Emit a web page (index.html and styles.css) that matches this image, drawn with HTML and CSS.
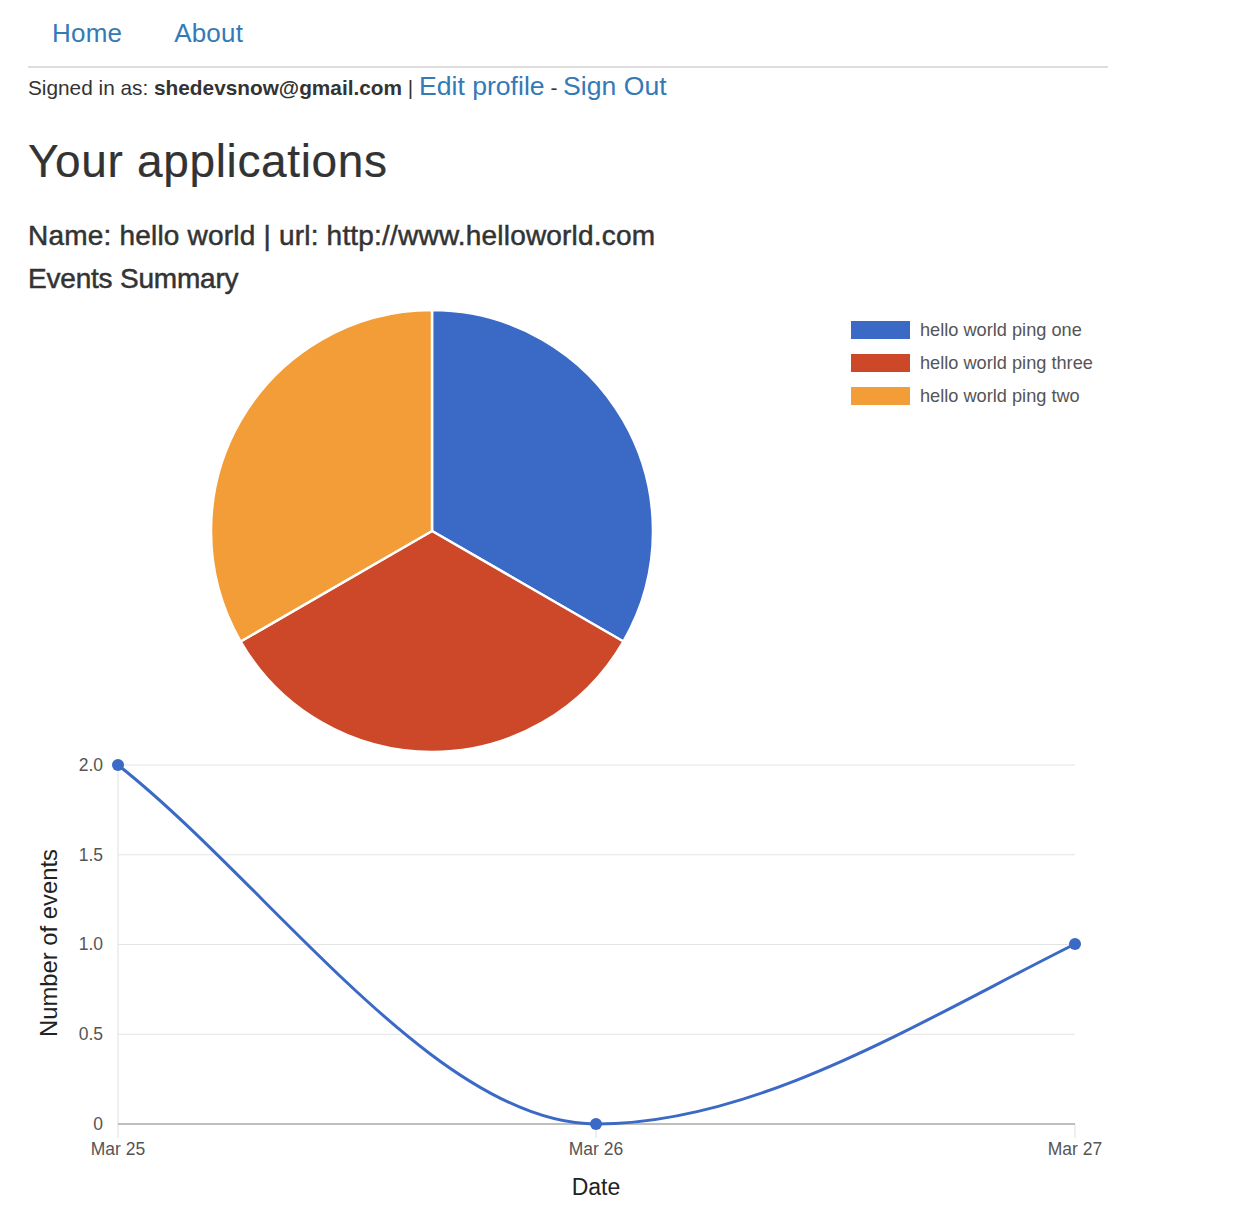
FILE: index.html
```html
<!DOCTYPE html>
<html lang="en">
<head>
<meta charset="utf-8">
<title>Your applications</title>
<link rel="stylesheet" href="styles.css">
</head>
<body>
<div class="page">
  <nav class="nav">
    <a href="#">Home</a>
    <a href="#">About</a>
  </nav>
  <p class="signed">Signed in as: <strong>shedevsnow@gmail.com</strong> | <a href="#">Edit profile</a> - <a href="#">Sign Out</a></p>
  <h1 class="title">Your applications</h1>
  <h3 class="app-name">Name: hello world | url: http://www.helloworld.com</h3>
  <h4 class="summary">Events Summary</h4>
  <svg class="pie" width="1080" height="461" viewBox="28 294 1080 461">
    <g stroke="#fff" stroke-width="2.5" stroke-linejoin="round">
      <path d="M432,531 L432,310 A221,221 0 0 1 623.4,641.5 Z" fill="#3a69c6"/>
      <path d="M432,531 L623.4,641.5 A221,221 0 0 1 240.6,641.5 Z" fill="#cc4828"/>
      <path d="M432,531 L240.6,641.5 A221,221 0 0 1 432,310 Z" fill="#f39d38"/>
    </g>
    <g class="legend">
      <rect x="851" y="321" width="59" height="18" fill="#3a69c6"/>
      <text x="920" y="336">hello world ping one</text>
      <rect x="851" y="354" width="59" height="18" fill="#cc4828"/>
      <text x="920" y="369">hello world ping three</text>
      <rect x="851" y="387" width="59" height="18" fill="#f39d38"/>
      <text x="920" y="402">hello world ping two</text>
    </g>
  </svg>
  <svg class="line" width="1080" height="459" viewBox="28 755 1080 459">
    <g stroke="#e4e4e4" stroke-width="1.2">
      <line x1="118" y1="765" x2="1075" y2="765"/>
      <line x1="118" y1="854.75" x2="1075" y2="854.75"/>
      <line x1="118" y1="944.5" x2="1075" y2="944.5"/>
      <line x1="118" y1="1034.25" x2="1075" y2="1034.25"/>
      <line x1="118" y1="765" x2="118" y2="1138"/>
      <line x1="596" y1="1124" x2="596" y2="1138"/>
      <line x1="1075" y1="1124" x2="1075" y2="1138"/>
    </g>
    <line x1="118" y1="1124" x2="1075" y2="1124" stroke="#a8a8a8" stroke-width="1.5"/>
    <g class="ticks" text-anchor="end">
      <text x="103" y="771">2.0</text>
      <text x="103" y="861">1.5</text>
      <text x="103" y="950">1.0</text>
      <text x="103" y="1040">0.5</text>
      <text x="103" y="1130">0</text>
    </g>
    <g class="ticks" text-anchor="middle">
      <text x="118" y="1155">Mar 25</text>
      <text x="596" y="1155">Mar 26</text>
      <text x="1075" y="1155">Mar 27</text>
    </g>
    <text class="axis-title" x="596" y="1195" text-anchor="middle">Date</text>
    <text class="axis-title axis-title-v" x="0" y="0" text-anchor="middle" transform="translate(57,943) rotate(-90)">Number of events</text>
    <path d="M118,765 C270,885 437,1124 596,1124 C756,1124 915,1024 1075,944" fill="none" stroke="#3a69c6" stroke-width="3"/>
    <g fill="#3a69c6">
      <circle cx="118" cy="765" r="6"/>
      <circle cx="596" cy="1124" r="6"/>
      <circle cx="1075" cy="944" r="6"/>
    </g>
  </svg>
</div>
</body>
</html>
```
FILE: styles.css
```css
html, body {
  margin: 0;
  padding: 0;
  background: #fff;
}

body {
  font-family: "Liberation Sans", Arial, Helvetica, sans-serif;
  color: #333;
}

.page {
  width: 1080px;
  padding: 0 28px;
}

a {
  color: #337ab7;
  text-decoration: none;
}

.nav {
  display: flex;
  align-items: center;
  gap: 52px;
  height: 66px;
  padding-left: 24px;
  border-bottom: 2px solid #dddddd;
}

.nav a {
  font-size: 26px;
  line-height: 30px;
  letter-spacing: 0.2px;
}

.signed {
  margin: 0;
  padding-top: 3px;
  height: 31px;
  font-size: 20.8px;
  line-height: 31px;
  color: #333;
}

.signed strong {
  font-weight: bold;
}

.signed a {
  font-size: 26.6px;
}

.title {
  margin: 34px 0 0;
  font-size: 46px;
  line-height: 50px;
  font-weight: normal;
  letter-spacing: 0.65px;
  -webkit-text-stroke: 0.2px #333;
}

.app-name {
  margin: 34px 0 0;
  font-size: 28px;
  line-height: 31px;
  font-weight: normal;
  letter-spacing: 0.2px;
  -webkit-text-stroke: 0.5px #333;
}

.summary {
  margin: 12px 0 0;
  font-size: 28px;
  line-height: 31px;
  font-weight: normal;
  letter-spacing: -0.2px;
  -webkit-text-stroke: 0.5px #333;
}

svg {
  display: block;
}

.legend text {
  font-family: "Liberation Sans", Arial, sans-serif;
  font-size: 18.2px;
  fill: #555;
}

.ticks text {
  font-family: "Liberation Sans", Arial, sans-serif;
  font-size: 17.5px;
  fill: #555;
}

.axis-title {
  font-family: "Liberation Sans", Arial, sans-serif;
  font-size: 23px;
  fill: #222;
}

.axis-title-v {
  font-size: 23.8px;
}
```
